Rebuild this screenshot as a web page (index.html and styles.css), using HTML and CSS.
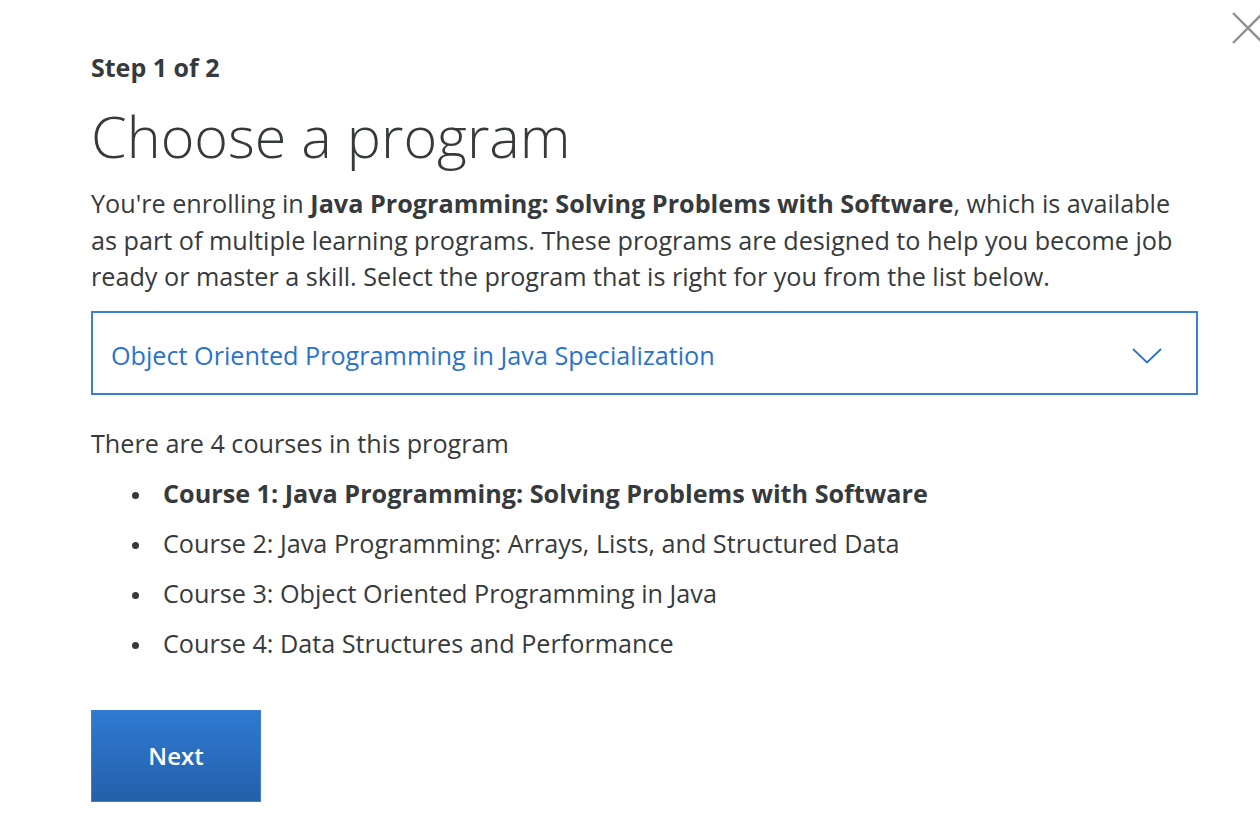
FILE: index.html
```html
<!DOCTYPE html>
<html>
<head>
<meta charset="utf-8">
<link rel="stylesheet" href="styles.css">
</head>
<body>
<div class="modal">
  <button class="close" aria-label="Close">
    <svg width="32" height="32" viewBox="0 0 32 32"><path d="M1 1 L31 31 M31 1 L1 31" stroke="#8f8f8f" stroke-width="2.3" fill="none"/></svg>
  </button>
  <div class="step">Step 1 of 2</div>
  <h1 class="title">Choose a program</h1>
  <p class="intro">You're enrolling in <strong>Java Programming: Solving Problems with Software</strong>, which is available as part of multiple learning programs. These programs are designed to help you become job ready or master a skill. Select the program that is right for you from the list below.</p>
  <div class="select">
    <span class="select-text">Object Oriented Programming in Java Specialization</span>
    <svg class="chev" width="30" height="16" viewBox="0 0 30 16"><path d="M1 1 L15 14.5 L29 1" stroke="#2a73cc" stroke-width="1.8" fill="none"/></svg>
  </div>
  <p class="count">There are 4 courses in this program</p>
  <ul class="courses">
    <li class="current">Course 1: Java Programming: Solving Problems with Software</li>
    <li>Course 2: Java Programming: Arrays, Lists, and Structured Data</li>
    <li>Course 3: Object Oriented Programming in Java</li>
    <li>Course 4: Data Structures and Performance</li>
  </ul>
  <button class="next">Next</button>
</div>
</body>
</html>
```
FILE: styles.css
```css
html, body {
  margin: 0;
  padding: 0;
  background: #fff;
}
body {
  font-family: "Open Sans", "Noto Sans", sans-serif;
  color: #373a3c;
}
.modal {
  position: relative;
  width: 1260px;
  height: 830px;
  box-sizing: border-box;
  padding: 50px 62px 0 91px;
  overflow: hidden;
}
.close {
  position: absolute;
  top: 12px;
  left: 1232px;
  border: 0;
  background: none;
  padding: 0;
  width: 32px;
  height: 32px;
}
.close svg {
  display: block;
}
.step {
  font-size: 25px;
  font-weight: 700;
  line-height: 34px;
}
.title {
  margin: 15px 0 0;
  font-size: 57.5px;
  font-weight: 300;
  line-height: 74px;
}
.intro {
  margin: 12px 0 0;
  font-size: 25.2px;
  line-height: 36.5px;
  width: 1095px;
}
.intro strong {
  font-weight: 700;
}
.select {
  margin-top: 16px;
  width: 1107px;
  height: 84px;
  box-sizing: border-box;
  border: 2px solid #3a7fd5;
  display: flex;
  align-items: center;
  justify-content: space-between;
  padding: 5px 34px 0 18px;
}
.select-text {
  color: #2a73cc;
  font-size: 25.2px;
}
.chev {
  display: block;
  margin-top: 1px;
}
.count {
  margin: 28px 0 0;
  font-size: 25.2px;
  line-height: 40px;
}
.courses {
  margin: 5px 0 0;
  padding: 0 0 0 72px;
  list-style: none;
  font-size: 25.2px;
  line-height: 50.3px;
}
.courses li::before {
  content: "";
  display: inline-block;
  width: 7px;
  height: 7px;
  border-radius: 50%;
  background: #373a3c;
  margin-left: -31px;
  margin-right: 24px;
  vertical-align: 4px;
}
.courses li.current {
  font-weight: 700;
}
.next {
  margin-top: 41px;
  width: 170px;
  height: 92px;
  border: 1px solid #3a80d8;
  background: linear-gradient(#2f7ad2, #2460ab);
  color: #fff;
  font-family: "Open Sans", sans-serif;
  font-size: 24px;
  font-weight: 600;
}
```
